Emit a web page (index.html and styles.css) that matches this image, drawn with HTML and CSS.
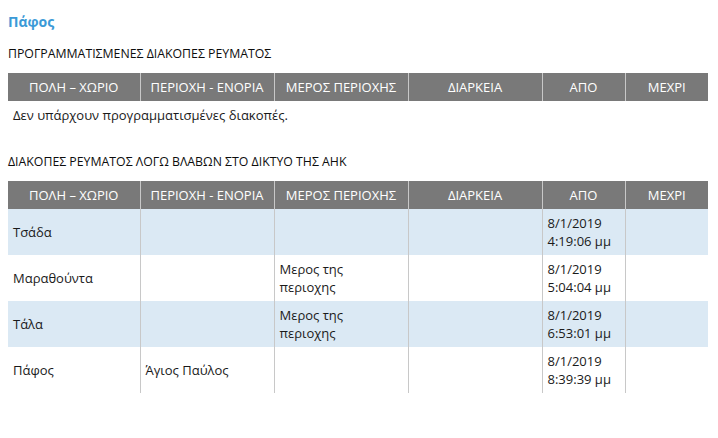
FILE: index.html
```html
<!DOCTYPE html>
<html lang="el">
<head>
<meta charset="utf-8">
<link rel="stylesheet" href="styles.css">
</head>
<body>
<div class="page">
  <h2 class="area-title">Πάφος</h2>

  <h3 class="section-title">ΠΡΟΓΡΑΜΜΑΤΙΣΜΕΝΕΣ ΔΙΑΚΟΠΕΣ ΡΕΥΜΑΤΟΣ</h3>
  <table class="outages">
    <colgroup>
      <col class="c1"><col class="c2"><col class="c3"><col class="c4"><col class="c5"><col class="c6">
    </colgroup>
    <thead>
      <tr><th>ΠΟΛΗ – ΧΩΡΙΟ</th><th>ΠΕΡΙΟΧΗ - ΕΝΟΡΙΑ</th><th>ΜΕΡΟΣ ΠΕΡΙΟΧΗΣ</th><th>ΔΙΑΡΚΕΙΑ</th><th>ΑΠΟ</th><th>ΜΕΧΡΙ</th></tr>
    </thead>
    <tbody>
      <tr class="empty"><td colspan="6">Δεν υπάρχουν προγραμματισμένες διακοπές.</td></tr>
    </tbody>
  </table>

  <h3 class="section-title second">ΔΙΑΚΟΠΕΣ ΡΕΥΜΑΤΟΣ ΛΟΓΩ ΒΛΑΒΩΝ ΣΤΟ ΔΙΚΤΥΟ ΤΗΣ ΑΗΚ</h3>
  <table class="outages">
    <colgroup>
      <col class="c1"><col class="c2"><col class="c3"><col class="c4"><col class="c5"><col class="c6">
    </colgroup>
    <thead>
      <tr><th>ΠΟΛΗ – ΧΩΡΙΟ</th><th>ΠΕΡΙΟΧΗ - ΕΝΟΡΙΑ</th><th>ΜΕΡΟΣ ΠΕΡΙΟΧΗΣ</th><th>ΔΙΑΡΚΕΙΑ</th><th>ΑΠΟ</th><th>ΜΕΧΡΙ</th></tr>
    </thead>
    <tbody>
      <tr class="alt"><td>Τσάδα</td><td></td><td></td><td></td><td>8/1/2019<br>4:19:06 μμ</td><td></td></tr>
      <tr><td>Μαραθούντα</td><td></td><td>Μερος της<br>περιοχης</td><td></td><td>8/1/2019<br>5:04:04 μμ</td><td></td></tr>
      <tr class="alt"><td>Τάλα</td><td></td><td>Μερος της<br>περιοχης</td><td></td><td>8/1/2019<br>6:53:01 μμ</td><td></td></tr>
      <tr><td>Πάφος</td><td>Άγιος Παύλος</td><td></td><td></td><td>8/1/2019<br>8:39:39 μμ</td><td></td></tr>
    </tbody>
  </table>
</div>
</body>
</html>
```

FILE: styles.css
```css
html, body {
  margin: 0;
  padding: 0;
  background: #ffffff;
}

body {
  font-family: "Open Sans", "Liberation Sans", sans-serif;
  color: #1a1a1a;
  font-size: 13px;
}

.page {
  padding: 12px 10px 0 8px;
}

.area-title {
  margin: 0;
  font-size: 14px;
  line-height: 19px;
  font-weight: 700;
  color: #3b9ad7;
}

.section-title {
  margin: 15px 0 11px;
  font-size: 12.3px;
  line-height: 16px;
  font-weight: 400;
  color: #0d0d0d;
}

.section-title.second {
  margin-top: 25px;
  margin-bottom: 11px;
}

.outages {
  width: 700px;
  border-collapse: collapse;
  table-layout: fixed;
}

.c1 { width: 132px; }
.c2 { width: 134px; }
.c3 { width: 134px; }
.c4 { width: 134px; }
.c5 { width: 83px; }
.c6 { width: 83px; }

.outages th {
  background: #797979;
  color: #ffffff;
  font-weight: 400;
  font-size: 13px;
  height: 28px;
  padding: 0 4px;
  text-align: center;
  vertical-align: middle;
  line-height: 16px;
  white-space: nowrap;
}

.outages th + th,
.outages td + td {
  border-left: 1px solid #c8c8c8;
}

.outages td {
  padding: 5px 5px;
  line-height: 18px;
  height: 36px;
  vertical-align: middle;
  text-align: left;
}

.outages .empty td {
  height: 18px;
}

.outages tr.alt td {
  background: #dbe9f4;
}
```
